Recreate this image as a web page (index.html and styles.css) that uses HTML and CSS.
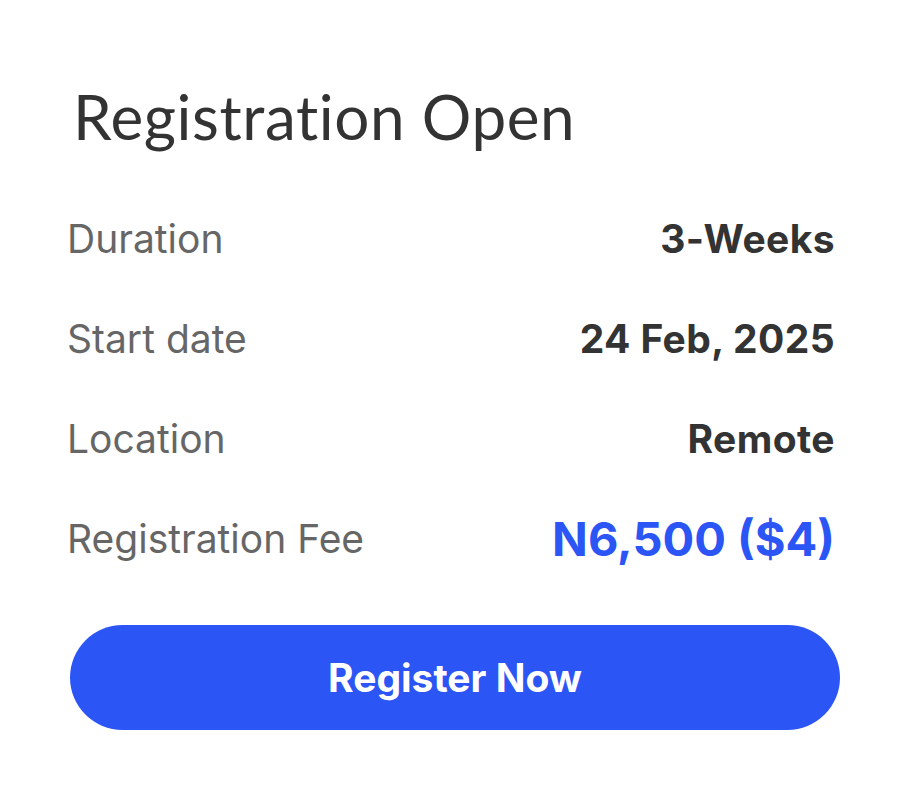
FILE: index.html
```html
<!DOCTYPE html>
<html>
<head>
<meta charset="utf-8">
<link rel="stylesheet" href="styles.css">
</head>
<body>
<div class="card">
  <h1 class="title">Registration Open</h1>
  <div class="rows">
    <div class="row"><span class="label">Duration</span><span class="value">3-Weeks</span></div>
    <div class="row"><span class="label">Start date</span><span class="value">24 Feb, 2025</span></div>
    <div class="row"><span class="label">Location</span><span class="value">Remote</span></div>
    <div class="row"><span class="label">Registration Fee</span><span class="value fee">N6,500 ($4)</span></div>
  </div>
  <button class="btn">Register Now</button>
</div>
</body>
</html>
```
FILE: styles.css
```css
html, body { margin: 0; padding: 0; background: #fff; }
body { width: 906px; height: 808px; overflow: hidden; }
.card {
  padding: 76px 71px 0 67px;
  font-family: Inter, "Noto Sans", sans-serif;
}
.title {
  margin: 0 0 0 6px;
  font-family: "Lato", sans-serif;
  font-weight: 400;
  font-size: 62px;
  line-height: 80px;
  color: #333;
  letter-spacing: 0.6px;
}
.rows {
  margin-top: 33px;
  display: flex;
  flex-direction: column;
}
.row {
  display: flex;
  justify-content: space-between;
  align-items: center;
  height: 100px;
  line-height: 100px;
}
.label {
  font-size: 39px;
  color: #666;
  font-weight: 400;
}
.value {
  font-size: 39px;
  font-weight: 700;
  color: #333;
  letter-spacing: 0.4px;
}
.fee {
  font-size: 47px;
  color: #2b55f5;
  letter-spacing: 0;
}
.btn {
  display: block;
  margin: 36px 0 0 3px;
  width: 770px;
  height: 105px;
  border: none;
  border-radius: 53px;
  background: #2b55f5;
  color: #fff;
  font-family: Inter, "Noto Sans", sans-serif;
  font-weight: 700;
  font-size: 39px;
}
```
